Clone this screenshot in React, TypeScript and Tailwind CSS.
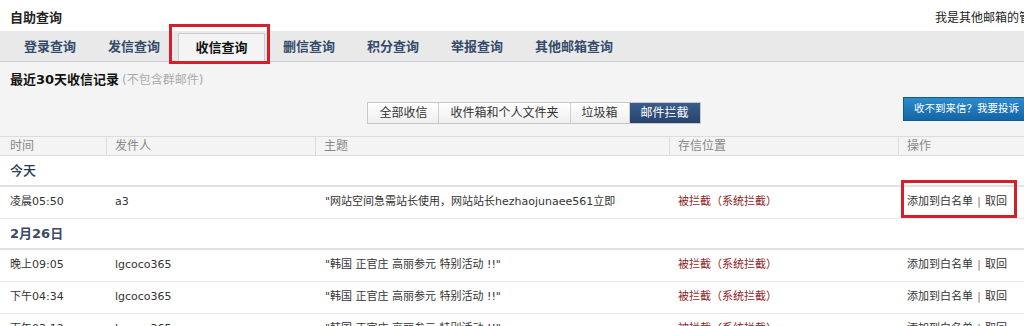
import React from 'react'

const tabs = ['登录查询', '发信查询', '收信查询', '删信查询', '积分查询', '举报查询', '其他邮箱查询']
const filters = ['全部收信', '收件箱和个人文件夹', '垃圾箱', '邮件拦截']
const cols = 'grid grid-cols-[106px_209px_354px_229px_1fr]'

type Row = { time: string; from: string; subject: string }

const groups: { label: string; bold?: boolean; rows: Row[] }[] = [
  { label: '今天', rows: [{ time: '凌晨05:50', from: 'a3', subject: '"网站空间急需站长使用，网站站长hezhaojunaee561立即' }] },
  {
    label: '2月26日',
    bold: true,
    rows: [
      { time: '晚上09:05', from: 'lgcoco365', subject: '"韩国 正官庄 高丽参元 特别活动 !!"' },
      { time: '下午04:34', from: 'lgcoco365', subject: '"韩国 正官庄 高丽参元 特别活动 !!"' },
      { time: '下午03:12', from: 'lgcoco365', subject: '"韩国 正官庄 高丽参元 特别活动 !!"' },
    ],
  },
]

export default function App() {
  return (
    <div className="relative h-[326px] w-[1024px] overflow-hidden bg-white text-[11px] text-[#333] [font-family:'DejaVu_Sans','Noto_Sans_CJK_SC',sans-serif]">
      <div className="flex h-[31px] items-center justify-between pl-[10px] pt-[5px]">
        <span className="text-[13px] font-bold text-[#222]">自助查询</span>
        <span className="w-[89px] overflow-hidden whitespace-nowrap text-[12px] text-[#222]">我是其他邮箱的管</span>
      </div>

      <div className="flex h-[31px] items-end border-b border-[#c9cdd2] bg-[#e9e9e9] pl-[8px]">
        {tabs.map((t, i) => (
          <div
            key={t}
            className={
              i === 2
                ? 'mx-[2px] -mb-px flex h-[29px] w-[87px] items-center justify-center border border-b-0 border-[#c9cdd2] bg-[#f4f4f4] text-[13px] font-bold text-[#111]'
                : 'flex h-[29px] items-center px-[16px] text-[13px] font-bold text-[#344a6a]'
            }
          >
            {t}
          </div>
        ))}
      </div>

      <div className="bg-[#f4f4f4]">
        <div className="flex h-[36px] items-center pl-[10px]">
          <span className="text-[13px] font-bold text-[#111]">最近30天收信记录</span>
          <span className="ml-[3px] text-[12px] text-[#aaa]">(不包含群邮件)</span>
        </div>
        <div className="relative flex h-[38px] items-start justify-center pt-[4px] pl-[44px]">
          <div className="flex h-[22px] border border-[#c8c8c8] text-[12px]">
            {filters.map((f, i) => (
              <div
                key={f}
                className={
                  i === 3
                    ? 'flex items-center bg-gradient-to-b from-[#3a5d8c] to-[#27436c] px-[11px] text-white'
                    : 'flex items-center border-r border-[#d0d0d0] bg-gradient-to-b from-white to-[#efefef] px-[11px] text-[#333]'
                }
              >
                {f}
              </div>
            ))}
          </div>
          <div className="absolute left-[903px] top-[-1px] flex h-[24px] w-[121px] items-center border border-r-0 border-[#0f5a94] bg-gradient-to-b from-[#2d8bcd] to-[#1465a5] pl-[10px] whitespace-nowrap text-[10.5px] text-white">
            收不到来信？我要投诉
          </div>
        </div>

        <div className={`${cols} h-[20px] border-y border-[#dcdcdc] text-[12px] text-[#888]`}>
          {['时间', '发件人', '主题', '存信位置', '操作'].map((h, i) => (
            <div key={h} className={`flex items-center ${i === 0 ? 'pl-[10px]' : 'border-l border-[#dcdcdc] pl-[8px]'}`}>
              {h}
            </div>
          ))}
        </div>
      </div>

      {groups.map(g => (
        <div key={g.label}>
          <div className="flex h-[31px] items-center border-b-2 border-[#e2e2e2] pl-[10px]">
            <span className={`text-[13px] ${g.bold ? 'font-bold text-[#3b4a66]' : 'font-medium text-[#2a3a55]'}`}>{g.label}</span>
          </div>
          {g.rows.map((r, i) => (
            <div key={i} className={`${cols} h-[32px] border-b border-[#e8e8e8]`}>
              <div className="flex items-center pl-[10px]">{r.time}</div>
              <div className="flex items-center pl-[9px]">{r.from}</div>
              <div className="flex items-center whitespace-nowrap pl-[10px]">{r.subject}</div>
              <div className="flex items-center pl-[9px] text-[#8b1c1c]">被拦截（系统拦截）</div>
              <div className="flex items-center whitespace-nowrap pl-[9px]">
                添加到白名单<span className="mx-[4px] font-bold text-[#999]">|</span>取回
              </div>
            </div>
          ))}
        </div>
      ))}

      <div className="pointer-events-none absolute left-[169px] top-[24px] h-[40px] w-[101px] border-[3px] border-[#d4202c]" />
      <div className="pointer-events-none absolute left-[901px] top-[180px] h-[38px] w-[116px] border-[3px] border-[#d4202c]" />
    </div>
  )
}
